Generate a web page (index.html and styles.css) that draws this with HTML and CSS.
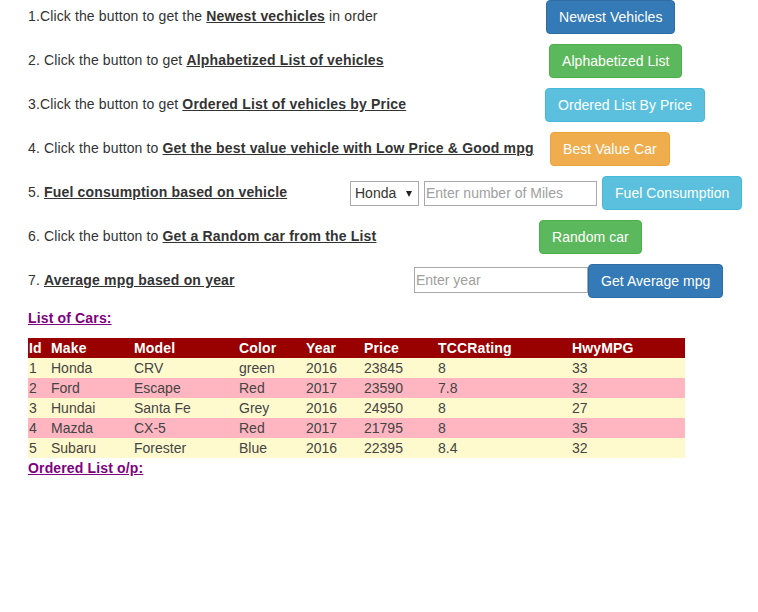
FILE: index.html
```html
<!DOCTYPE html>
<html>
<head>
<meta charset="utf-8">
<link rel="stylesheet" href="styles.css">
</head>
<body>
<div class="page">
  <div class="rows">
    <div class="row r1">
      <span class="txt">1.Click the button to get the <b>Newest vechicles</b> in order</span>
      <div class="ctl"><button class="btn primary">Newest Vehicles</button></div>
    </div>
    <div class="row r2">
      <span class="txt">2. Click the button to get <b>Alphabetized List of vehicles</b></span>
      <div class="ctl"><button class="btn success">Alphabetized List</button></div>
    </div>
    <div class="row r3">
      <span class="txt">3.Click the button to get <b>Ordered List of vehicles by Price</b></span>
      <div class="ctl"><button class="btn info">Ordered List By Price</button></div>
    </div>
    <div class="row r4">
      <span class="txt">4. Click the button to <b>Get the best value vehicle with Low Price &amp; Good mpg</b></span>
      <div class="ctl"><button class="btn warning">Best Value Car</button></div>
    </div>
    <div class="row r5">
      <span class="txt">5. <b>Fuel consumption based on vehicle</b></span>
      <div class="ctl">
        <span class="sel"><select><option>Honda</option><option>Ford</option><option>Hundai</option><option>Mazda</option><option>Subaru</option></select></span>
        <input class="miles" type="text" placeholder="Enter number of Miles">
        <button class="btn info">Fuel Consumption</button>
      </div>
    </div>
    <div class="row r6">
      <span class="txt">6. Click the button to <b>Get a Random car from the List</b></span>
      <div class="ctl"><button class="btn success">Random car</button></div>
    </div>
    <div class="row r7">
      <span class="txt">7. <b>Average mpg based on year</b></span>
      <div class="ctl tight">
        <input class="year" type="text" placeholder="Enter year">
        <button class="btn primary">Get Average mpg</button>
      </div>
    </div>
  </div>

  <div class="heading">List of Cars:</div>
  <table class="cars">
    <colgroup>
      <col class="c-id"><col class="c-make"><col class="c-model"><col class="c-color"><col class="c-year"><col class="c-price"><col class="c-tcc"><col class="c-hwy">
    </colgroup>
    <thead>
      <tr><th>Id</th><th>Make</th><th>Model</th><th>Color</th><th>Year</th><th>Price</th><th>TCCRating</th><th>HwyMPG</th></tr>
    </thead>
    <tbody>
      <tr><td>1</td><td>Honda</td><td>CRV</td><td>green</td><td>2016</td><td>23845</td><td>8</td><td>33</td></tr>
      <tr><td>2</td><td>Ford</td><td>Escape</td><td>Red</td><td>2017</td><td>23590</td><td>7.8</td><td>32</td></tr>
      <tr><td>3</td><td>Hundai</td><td>Santa Fe</td><td>Grey</td><td>2016</td><td>24950</td><td>8</td><td>27</td></tr>
      <tr><td>4</td><td>Mazda</td><td>CX-5</td><td>Red</td><td>2017</td><td>21795</td><td>8</td><td>35</td></tr>
      <tr><td>5</td><td>Subaru</td><td>Forester</td><td>Blue</td><td>2016</td><td>22395</td><td>8.4</td><td>32</td></tr>
    </tbody>
  </table>
  <div class="heading after">Ordered List o/p:</div>
</div>
</body>
</html>
```
FILE: styles.css
```css
html, body {
  margin: 0;
  padding: 0;
  background: #fff;
}
body {
  font-family: "Liberation Sans", Arial, sans-serif;
  font-size: 14px;
  color: #333;
}
.page {
  padding: 0 0 0 28px;
}
.rows {
  display: flex;
  flex-direction: column;
  gap: 10px;
}
.row {
  display: grid;
  height: 34px;
  align-items: center;
}
.r1 { grid-template-columns: 518px auto; }
.r2 { grid-template-columns: 521px auto; }
.r3 { grid-template-columns: 517px auto; }
.r4 { grid-template-columns: 522px auto; }
.r5 { grid-template-columns: 322px auto; }
.r6 { grid-template-columns: 511px auto; }
.r7 { grid-template-columns: 386px auto; }
.txt {
  white-space: nowrap;
  line-height: 20px;
  margin-top: -2px;
  letter-spacing: 0.13px;
}
.txt b {
  text-decoration: underline;
  font-weight: bold;
  letter-spacing: 0.18px;
}
.ctl {
  display: flex;
  align-items: center;
  gap: 5px;
}
.ctl.tight { gap: 0; }
.btn {
  font-family: "Liberation Sans", Arial, sans-serif;
  font-size: 14px;
  line-height: 20px;
  height: 34px;
  padding: 6px 12px;
  border: 1px solid transparent;
  border-radius: 4px;
  color: #fff;
  cursor: pointer;
  white-space: nowrap;
  letter-spacing: 0.05px;
}
.primary { background: #337ab7; border-color: #2e6da4; }
.success { background: #5cb85c; border-color: #4cae4c; }
.info { background: #5bc0de; border-color: #46b8da; }
.warning { background: #f0ad4e; border-color: #eea236; }
.sel {
  position: relative;
  display: inline-block;
}
.sel select {
  appearance: none;
  -webkit-appearance: none;
  width: 69px;
  height: 25px;
  border: 1px solid #a9a9a9;
  border-radius: 0;
  background: #fff;
  font-family: "Liberation Sans", Arial, sans-serif;
  font-size: 14px;
  color: #333;
  padding: 0 0 0 4px;
  margin: 0;
}
.sel::after {
  content: "";
  position: absolute;
  right: 7px;
  top: 10px;
  border-left: 3.5px solid transparent;
  border-right: 3.5px solid transparent;
  border-top: 6px solid #222;
  pointer-events: none;
}
input {
  font-family: "Liberation Sans", Arial, sans-serif;
  font-size: 14px;
  height: 25px;
  box-sizing: border-box;
  border: 1px solid #a9a9a9;
  padding: 0 1px;
  margin: 0;
  color: #333;
}
input::placeholder { color: #a0a0a0; }
.miles { width: 173px; }
.year { width: 174px; height: 26px; margin-top: -2px; }
.heading {
  color: #800080;
  font-weight: bold;
  text-decoration: underline;
  line-height: 20px;
  margin: 10px 0 10px;
  letter-spacing: 0.15px;
}
.heading.after { margin: 0; }
.cars {
  border-collapse: collapse;
  table-layout: fixed;
  width: 657px;
}
.c-id { width: 22px; }
.c-make { width: 83px; }
.c-model { width: 105px; }
.c-color { width: 67px; }
.c-year { width: 58px; }
.c-price { width: 74px; }
.c-tcc { width: 134px; }
.c-hwy { width: 114px; }
.cars th, .cars td {
  height: 20px;
  padding: 0 0 0 1px;
  text-align: left;
  line-height: 20px;
  white-space: nowrap;
}
.cars th {
  background: #990000;
  color: #fff;
  font-weight: bold;
  letter-spacing: 0.15px;
}
.cars td { color: #444; }
.cars tbody tr:nth-child(odd) { background: #fffacd; }
.cars tbody tr:nth-child(even) { background: #ffb6c1; }
```
